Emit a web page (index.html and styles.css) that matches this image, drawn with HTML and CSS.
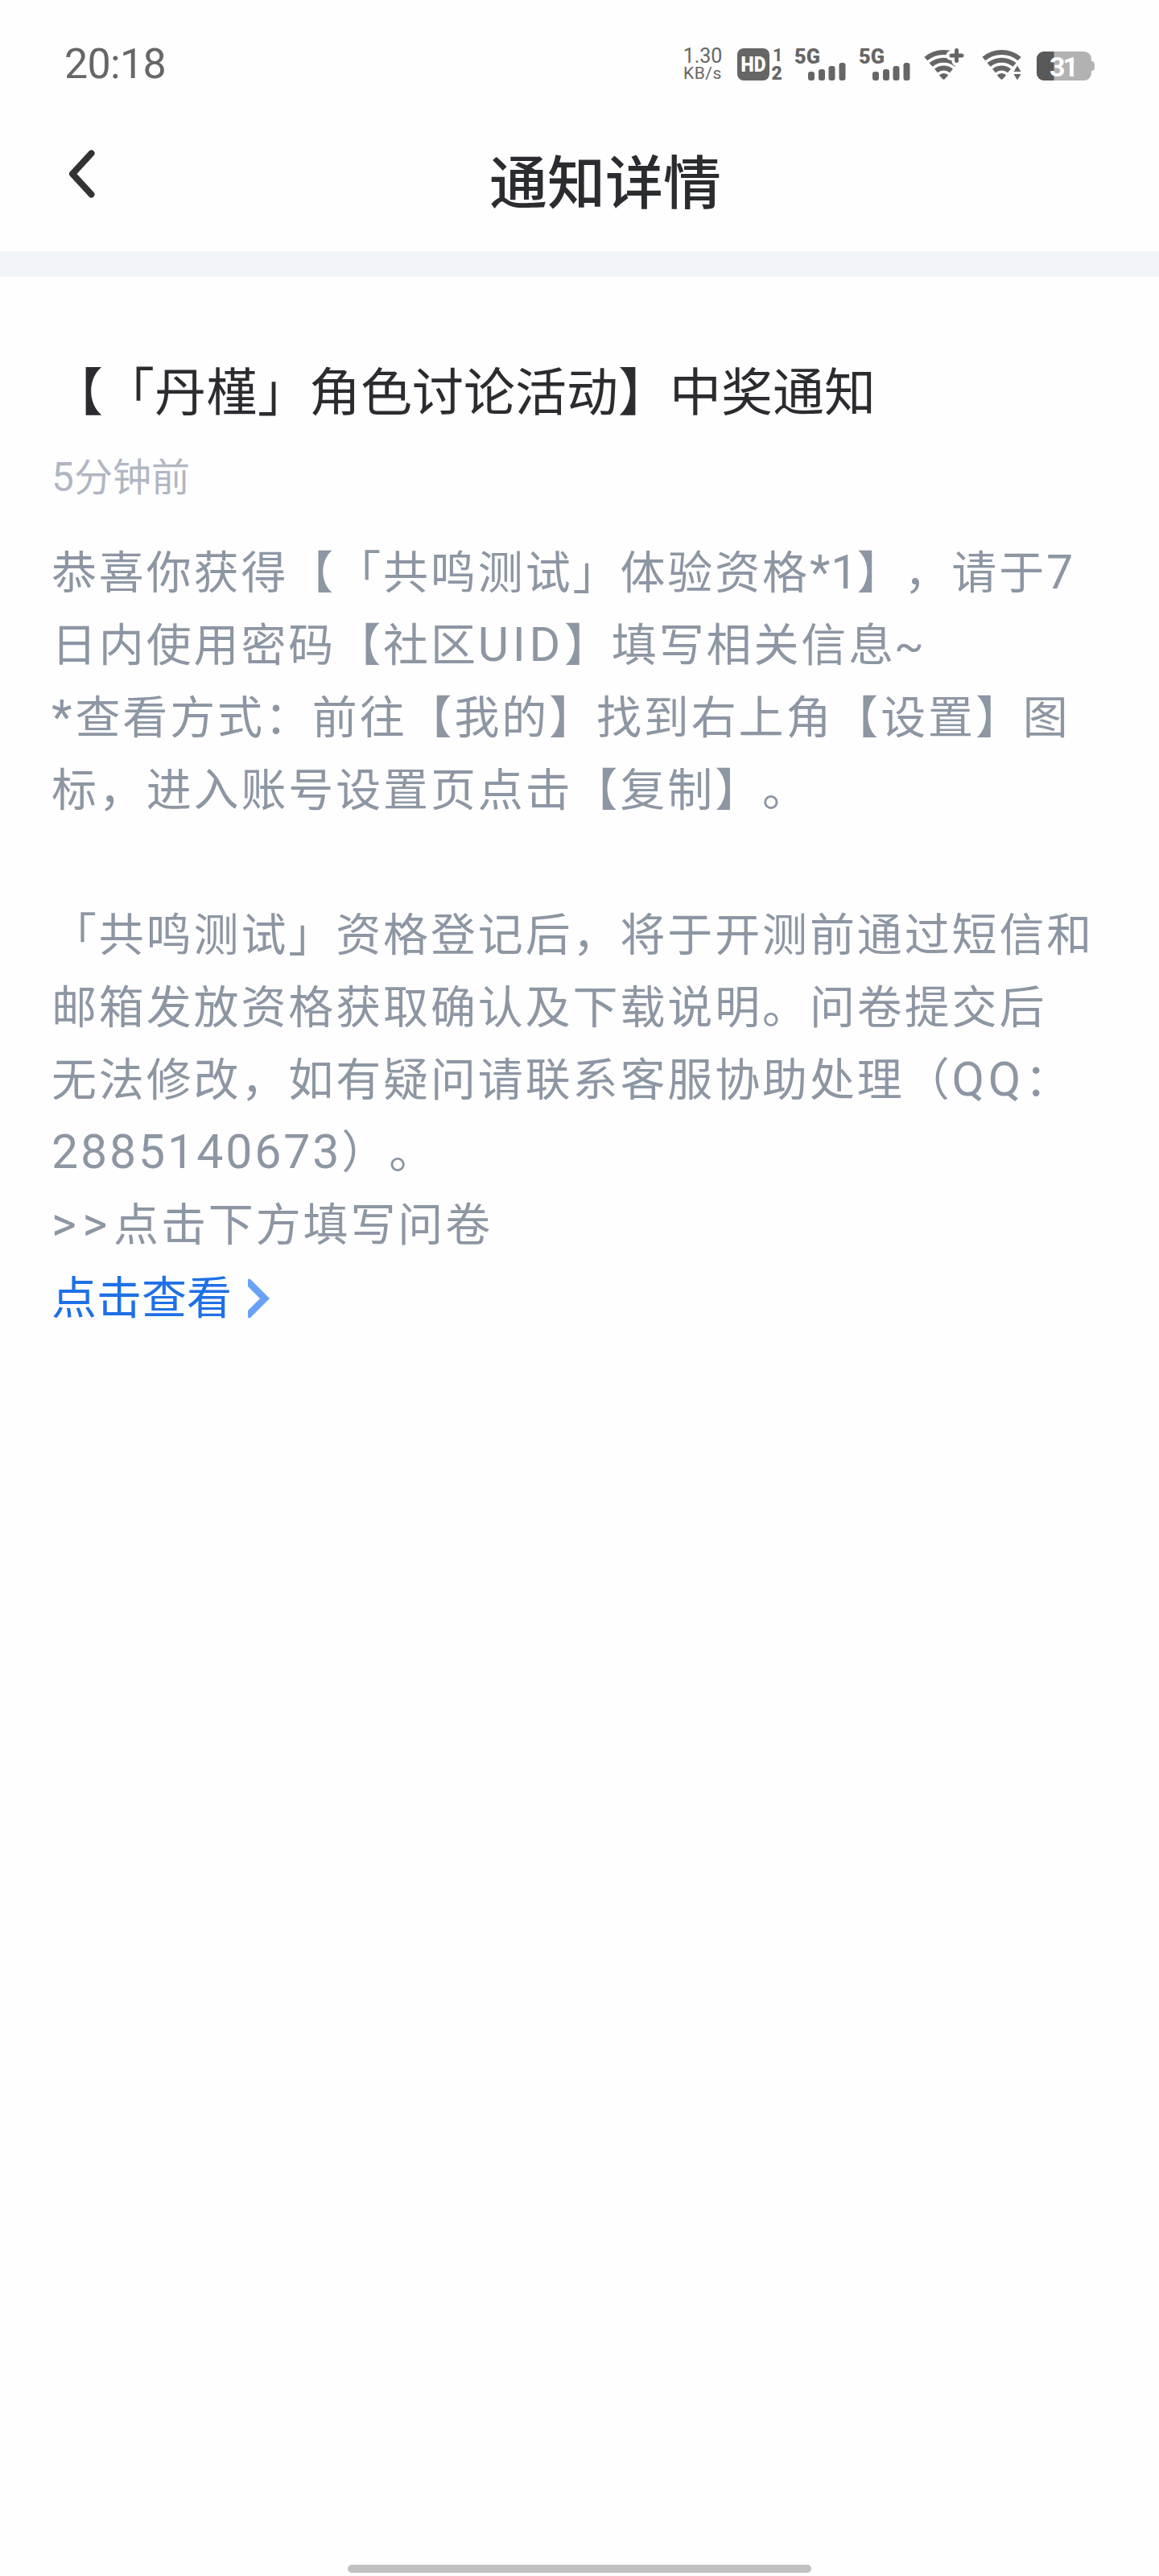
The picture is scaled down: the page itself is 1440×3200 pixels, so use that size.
FILE: index.html
```html
<!DOCTYPE html>
<html lang="zh-CN">
<head>
    <meta charset="UTF-8">
    <meta name="viewport" content="width=device-width, initial-scale=1.0">
    <title>通知详情</title>
    <link rel="stylesheet" href="styles.css">
</head>
<body>
    <div class="status-bar">
        <div class="clock">20:18</div>
        <div class="status-icons">
            <div class="speed">
                <span class="speed-num">1.30</span>
                <span class="speed-unit">KB/s</span>
            </div>
            <svg class="hd" width="58" height="40" viewBox="0 0 58 40">
                <rect width="40" height="40" rx="8" fill="#666"/>
                <text x="4.5" y="29" font-size="25" font-weight="900" fill="#fff" textLength="31" lengthAdjust="spacingAndGlyphs">HD</text>
                <text x="44" y="16" font-size="22" font-weight="700" fill="#666">1</text>
                <text x="42.5" y="39" font-size="23" font-weight="900" fill="#666">2</text>
            </svg>
            <svg class="signal" width="63" height="40" viewBox="0 0 63 40" fill="#666">
                <text x="-1" y="19" font-size="26" font-weight="900" textLength="32" lengthAdjust="spacingAndGlyphs">5G</text>
                <rect x="16" y="29" width="8" height="11" rx="3"/>
                <rect x="29" y="26" width="8" height="14" rx="3"/>
                <rect x="41.5" y="22" width="8" height="18" rx="3"/>
                <rect x="54.5" y="18" width="8" height="22" rx="3"/>
            </svg>
            <svg class="signal" width="63" height="40" viewBox="0 0 63 40" fill="#666">
                <text x="-1" y="19" font-size="26" font-weight="900" textLength="32" lengthAdjust="spacingAndGlyphs">5G</text>
                <rect x="16" y="29" width="8" height="11" rx="3"/>
                <rect x="29" y="26" width="8" height="14" rx="3"/>
                <rect x="41.5" y="22" width="8" height="18" rx="3"/>
                <rect x="54.5" y="18" width="8" height="22" rx="3"/>
            </svg>
            <svg class="wifi" width="50" height="40" viewBox="0 0 50 40" fill="none" stroke="#666" stroke-width="6">
                <path d="M2.3 13A34.5 34.5 0 0 1 46.7 13"/>
                <path d="M8.5 20.6A24.5 24.5 0 0 1 40.5 20.6"/>
                <path d="M15 28A14.7 14.7 0 0 1 34 28"/>
                <path d="M24.5 37.5L20.5 33.6Q24.5 31 28.5 33.6Z" fill="#666" stroke-width="2.5" stroke-linejoin="round"/>
                <path d="M40.5 2V16M33.5 9H47.5" stroke="#fff" stroke-width="12" stroke-linecap="round"/>
                <path d="M40.5 2.5V15.5M34 9H47" stroke-width="5" stroke-linecap="round"/>
            </svg>
            <svg class="wifi wifi-2" width="50" height="40" viewBox="0 0 50 40" fill="none" stroke="#666" stroke-width="6">
                <path d="M2.3 13A34.5 34.5 0 0 1 46.7 13"/>
                <path d="M8.5 20.6A24.5 24.5 0 0 1 40.5 20.6"/>
                <path d="M15 28A14.7 14.7 0 0 1 34 28"/>
                <path d="M24.5 37.5L20.5 33.6Q24.5 31 28.5 33.6Z" fill="#666" stroke-width="2.5" stroke-linejoin="round"/>
                <path d="M44 18L53 29L44 44L35 29Z" fill="#fff" stroke="none"/>
                <path d="M44 21.5L48.5 29H39.5ZM44 39.5L48.5 32H39.5Z" fill="#666" stroke="none"/>
            </svg>
            <svg class="battery" width="72" height="40" viewBox="0 0 72 40">
                <rect x="60" y="16" width="12" height="12" rx="4" fill="#b2b2b2"/>
                <rect y="4" width="68" height="36" rx="9" fill="#b2b2b2"/>
                <path d="M21.5 4H9A9 9 0 0 0 0 13V31A9 9 0 0 0 9 40H21.5Z" fill="#595959"/>
                <text x="16" y="34.5" font-size="34" font-weight="700" fill="#fff" textLength="36">31</text>
            </svg>
        </div>
    </div>

    <header class="nav">
        <svg class="back" width="36" height="64" viewBox="0 0 36 64" fill="none" stroke="#333" stroke-width="8" stroke-linecap="round" stroke-linejoin="round">
            <path d="M29.5 6.5L6 32L29.5 57.5"/>
        </svg>
        <h1>通知详情</h1>
    </header>

    <main class="notice">
        <h2>【「丹槿」角色讨论活动】中奖通知</h2>
        <p class="time"><span class="time-num">5</span>分钟前</p>
        <div class="content">
            恭喜你获得【「共鸣测试」体验资格<span class="star">*</span><span class="num one">1</span>】，请于<span class="num">7</span><br>
            日内使用密码【社区<span class="latin">UID</span>】填写相关信息<span class="tilde">~</span><br>
            <span class="star">*</span>查看方式：前往【我的】找到右上角【设置】图<br>
            标，进入账号设置页点击【复制】。<br>
            <br>
            「共鸣测试」资格登记后，将于开测前通过短信和<br>
            邮箱发放资格获取确认及下载说明。问卷提交后<br>
            无法修改，如有疑问请联系客服协助处理（<span class="latin">QQ</span>：<br>
            <span class="num">2885140673</span>）。<br>
            <span class="arrows">&gt;&gt;</span>点击下方填写问卷
        </div>
        <a class="link" href="#">点击查看<svg width="28" height="50" viewBox="0 0 28 50"><path d="M0 1Q3 0 5 3L27 25L5 47Q3 50 0 49V40L15 25L0 10Z" fill="#69a1f4"/></svg></a>
    </main>

    <div class="home-bar"></div>
</body>
</html>
```
FILE: styles.css
```css
* {
    box-sizing: border-box;
    margin: 0;
    padding: 0;
}
body {
    height: 3200px;
    display: flex;
    flex-direction: column;
    background: #fefefe;
    font-family: "Noto Sans CJK SC", sans-serif;
    text-spacing-trim: space-all;
    overflow: hidden;
}
/* 状态栏 */
.status-bar {
    height: 160px;
    display: flex;
    justify-content: space-between;
    padding: 60px 80px 0;
    font-family: Roboto, sans-serif;
    color: #666;
}
.clock {
    font-size: 52px;
    line-height: 40px;
    letter-spacing: -0.7px;
}
.status-icons {
    display: flex;
    height: 40px;
}
.status-icons svg {
    font-family: Roboto, sans-serif;
    overflow: visible;
}
.speed {
    width: 50px;
    margin-right: 18px;
    display: flex;
    flex-direction: column;
    align-items: center;
}
.speed-num {
    font-size: 25px;
    line-height: 19px;
}
.speed-unit {
    font-size: 21px;
    line-height: 24px;
    letter-spacing: 0.5px;
}
.hd {
    margin-right: 14px;
}
.signal {
    margin-right: 17px;
}
.wifi {
    margin-right: 22px;
}
.wifi-2 {
    margin-right: 18px;
}
/* 导航栏 */
.nav {
    height: 184px;
    display: flex;
    align-items: flex-start;
    padding: 24px 0 0 84px;
    border-bottom: 32px solid #f1f5f9;
}
.nav h1 {
    margin-left: 488px;
    font-size: 72px;
    font-weight: 500;
    line-height: 76px;
    color: #2b2c30;
}
/* 通知内容 */
.notice {
    flex: 1;
    padding: 93px 0 0 64px;
}
.notice h2 {
    font-size: 64px;
    font-weight: 400;
    line-height: 90px;
    color: #2b2c30;
}
.time {
    margin-top: 32px;
    font-size: 48px;
    line-height: 60px;
    color: #b0b7c3;
}
.time-num {
    font-family: Roboto, sans-serif;
    font-size: 50px;
    line-height: 1;
}
.content {
    margin-top: 43px;
    font-size: 56px;
    line-height: 90px;
    letter-spacing: 2.87px;
    white-space: nowrap;
    color: #8d96a3;
}
.num, .latin, .star, .arrows, .tilde {
    font-family: Roboto, sans-serif;
    font-size: 59px;
    line-height: 1;
}
.num.one {
    margin-left: -3px;
    letter-spacing: -1px;
}
.latin {
    letter-spacing: 4.7px;
}
.star {
    letter-spacing: 4px;
}
.arrows {
    letter-spacing: 7.7px;
}
.tilde {
    font-size: 54px;
    margin-left: -2px;
}
.link {
    display: flex;
    align-items: center;
    font-size: 56px;
    line-height: 92px;
    color: #1f70e6;
    text-decoration: none;
}
.link svg {
    margin: 10px 0 0 20px;
}
.home-bar {
    width: 576px;
    height: 10px;
    margin: 0 auto 4px;
    border-radius: 5px;
    background: #c1c1c1;
}
```
